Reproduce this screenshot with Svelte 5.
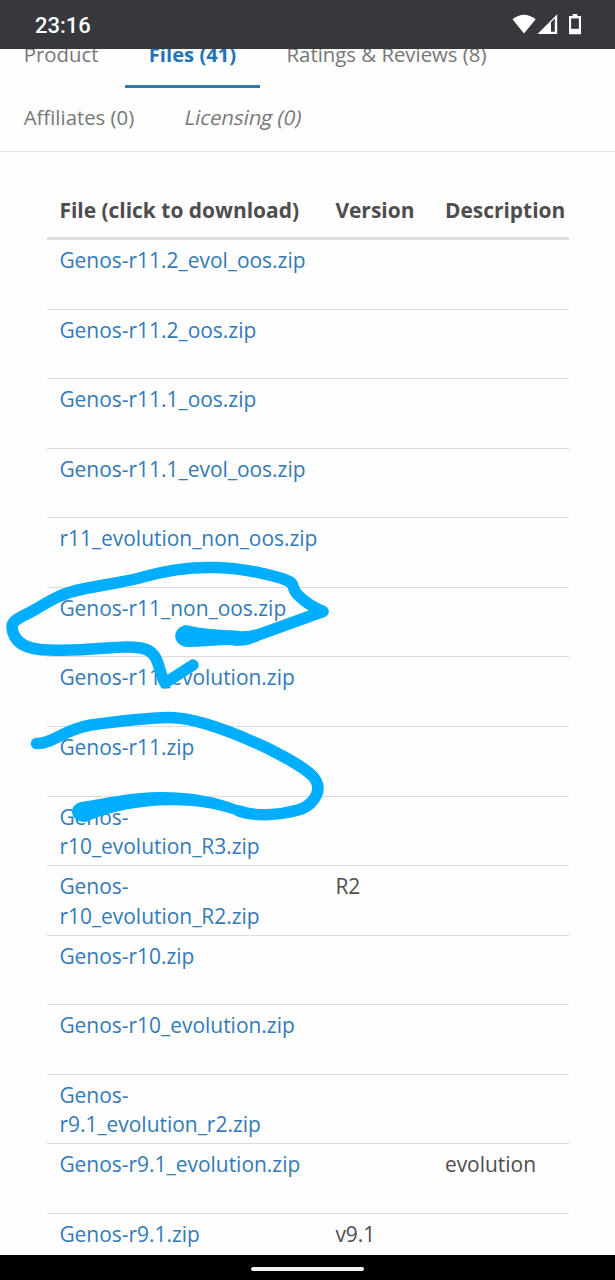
<script lang="ts">
	type Tab = { label: string; active?: boolean; muted?: boolean };
	type FileRow = { lines: string[]; version?: string; description?: string };

	const tabRows: Tab[][] = [
		[{ label: 'Product' }, { label: 'Files (41)', active: true }, { label: 'Ratings & Reviews (8)' }],
		[{ label: 'Affiliates (0)' }, { label: 'Licensing (0)', muted: true }]
	];

	const files: FileRow[] = [
		{ lines: ['Genos-r11.2_evol_oos.zip'] },
		{ lines: ['Genos-r11.2_oos.zip'] },
		{ lines: ['Genos-r11.1_oos.zip'] },
		{ lines: ['Genos-r11.1_evol_oos.zip'] },
		{ lines: ['r11_evolution_non_oos.zip'] },
		{ lines: ['Genos-r11_non_oos.zip'] },
		{ lines: ['Genos-r11_evolution.zip'] },
		{ lines: ['Genos-r11.zip'] },
		{ lines: ['Genos-', 'r10_evolution_R3.zip'] },
		{ lines: ['Genos-', 'r10_evolution_R2.zip'], version: 'R2' },
		{ lines: ['Genos-r10.zip'] },
		{ lines: ['Genos-r10_evolution.zip'] },
		{ lines: ['Genos-', 'r9.1_evolution_r2.zip'] },
		{ lines: ['Genos-r9.1_evolution.zip'], description: 'evolution' },
		{ lines: ['Genos-r9.1.zip'], version: 'v9.1' }
	];
</script>

<div class="screen">
	<header class="status">
		<span class="status__time">23:16</span>
		<svg class="status__icons" width="72" height="24" viewBox="0 0 72 24" aria-hidden="true">
			<path d="M0.5 6.2Q12 -2.8 23.7 6.2L12 20.4Z" fill="#fff" />
			<path d="M25.5 20.9L45.2 1.2V20.9Z" fill="#fff" />
			<path d="M39 9.3L42.8 5.5V18.7H39Z" fill="#37383c" />
			<path d="M60.7 1H65.3V3H69V21.2H57V3H60.7Z" fill="#fff" />
			<rect x="59.1" y="5.4" width="7.8" height="10.4" fill="#37383c" />
		</svg>
	</header>

	<main class="page">
		<nav class="tabs">
			{#each tabRows as row}
				<div class="tabs__row">
					{#each row as tab}
						<a class="tab" class:tab--active={tab.active} class:tab--muted={tab.muted} href="#top">{tab.label}</a>
					{/each}
				</div>
			{/each}
		</nav>

		<section class="files">
			<div class="row row--head">
				<span>File (click to download)</span>
				<span>Version</span>
				<span>Description</span>
			</div>
			{#each files as file}
				<div class="row">
					<a class="file" href="#file">
						{#each file.lines as line}
							<span>{line}</span>
						{/each}
					</a>
					<span>{file.version ?? ''}</span>
					<span>{file.description ?? ''}</span>
				</div>
			{/each}
		</section>
	</main>

	<footer class="navbar"><span class="navbar__handle"></span></footer>

	<!-- marker strokes drawn over the list -->
	<svg class="marks" viewBox="0 0 615 1280" aria-hidden="true">
		<path
			d="M193 665L165 683C158 671 160 654 145 649C125 643 95 652 50 650C24 650 13 641 12 627C12 619 23 617 36 609C51 600 62 593 83 589C108 584 125 582 143 577C174 568 200 567 216 567.5C245 568 282 577 290 582C295 585 291 589 299 596C307 604 315 608 323 611.5L255 636L235 640"
		/>
		<path
			class="fill"
			d="M186 625C200 629 222 630 235 630.5C244 632 249 631 257 629L259 641C251 644 244 647 232 645C216 645 202 647 187 647C172 645 171 628 186 625Z"
		/>
		<path d="M36.5 743.5C53 744 62 730 91 725C120 721 149 718 168 717.5C195 717 239 735 265 747C285 757 308 769 315 779C324 793 310 807 298 810C280 815 256 817 239 811" />
		<path
			class="fill"
			d="M81 802C107 798 133 792 161 792C193 792 217 797 240 806L241 817C221 810 204 806 180 805.5C145 804 111 811 86 822C70 823 67 805 81 802Z"
		/>
	</svg>
</div>

<style>
	:global(body) {
		margin: 0;
		background: #fff;
	}

	.screen {
		position: relative;
		display: flex;
		flex-direction: column;
		height: 1280px;
		overflow: hidden;
		background: #fefefe;
		color: #4d4d4d;
		font-family: 'Open Sans', sans-serif;
	}

	a {
		color: inherit;
		text-decoration: none;
	}

	.status {
		flex: none;
		display: flex;
		justify-content: space-between;
		align-items: center;
		height: 49px;
		box-sizing: border-box;
		padding: 0 31px 0 35px;
		background: #37383c;
	}

	.status__time {
		padding-top: 2px;
		color: #fff;
		font: 500 22px/28px Roboto, sans-serif;
	}

	.status__icons {
		margin-top: 1px;
	}

	.page {
		flex: 1;
		min-height: 0;
		overflow: hidden;
	}

	.tabs {
		margin-top: -25px;
		height: 128px;
		box-sizing: border-box;
		border-bottom: 1px solid #e2e2e2;
	}

	.tabs__row {
		display: flex;
		gap: 3px;
		height: 63.4px;
	}

	.tab {
		height: 64px;
		box-sizing: border-box;
		padding: 15.5px 23.7px 0;
		border-bottom: 3px solid transparent;
		color: #777;
		font-size: 20.35px;
		line-height: 28px;
		white-space: nowrap;
	}

	.tab--active {
		border-bottom-color: #2f7ab3;
		color: #2474b5;
		font-weight: 700;
		font-size: 20.2px;
	}

	/* slanted upright face, wider than the real italic */
	.tab--muted {
		transform: skewX(-12deg);
	}

	.files {
		width: 522px;
		margin: 30px 0 0 47.4px;
	}

	.row {
		display: grid;
		grid-template-columns: 276px 109.5px 1fr;
		height: 69.57px;
		box-sizing: border-box;
		padding: 6px 0 0 12px;
		border-bottom: 1px solid #dcdcdc;
		font-size: 20.95px;
		line-height: 29.6px;
		white-space: nowrap;
	}

	.row--head {
		height: 58px;
		padding-top: 14px;
		border-bottom: 3px solid #dedede;
		font-weight: 700;
	}

	.file {
		display: flex;
		flex-direction: column;
		color: #337ab7;
	}

	.navbar {
		flex: none;
		display: flex;
		justify-content: center;
		align-items: center;
		height: 25px;
		background: #000;
	}

	.navbar__handle {
		width: 113px;
		height: 4px;
		margin-top: 3px;
		border-radius: 2px;
		background: #f1f1f1;
	}

	.marks {
		position: absolute;
		inset: 0;
		width: 615px;
		height: 1280px;
		fill: none;
		stroke: #00aeff;
		stroke-width: 11.5;
		stroke-linecap: round;
		stroke-linejoin: round;
		pointer-events: none;
	}

	.marks .fill {
		fill: #00aeff;
		stroke: none;
	}
</style>
